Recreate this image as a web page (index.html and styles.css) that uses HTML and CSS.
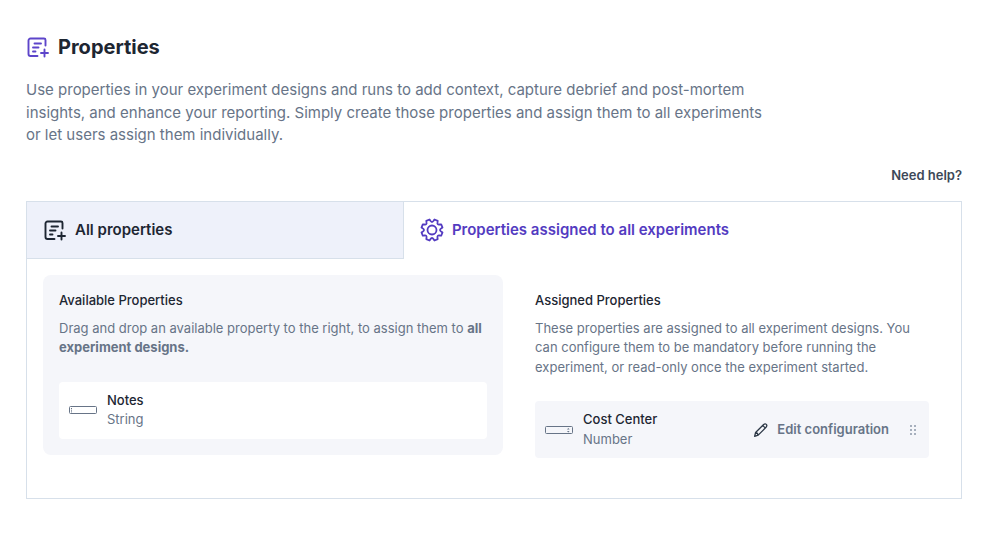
FILE: index.html
```html
<!DOCTYPE html>
<html lang="en">
<head>
<meta charset="utf-8">
<meta name="viewport" content="width=device-width, initial-scale=1">
<title>Properties</title>
<link rel="stylesheet" href="styles.css">
</head>
<body>
<svg class="sprite" aria-hidden="true">
  <symbol id="icon-properties" viewBox="0 0 24 24">
    <path d="M19.500 10.500V5a1.500 1.500 0 0 0-1.500-1.500H4.500a2 2 0 0 0-2 2v13.500a2 2 0 0 0 2 2h7M8.500 8.500H15M7 12.500h5.500M7 16.500H9.500M18.500 14.500v7M15 18h7" fill="none" stroke="currentColor" stroke-width="1.900" stroke-linecap="round"/>
  </symbol>
</svg>
<main class="page">
  <header class="intro">
    <h1 class="title"><svg class="icon title-icon" aria-hidden="true"><use href="#icon-properties"/></svg>Properties</h1>
    <p class="lead">Use properties in your experiment designs and runs to add context, capture debrief and post-mortem insights, and enhance your reporting. Simply create those properties and assign them to all experiments or let users assign them individually.</p>
  </header>
  <a class="help" href="#help">Need help?</a>
  <section class="box">
    <div class="tabs" role="tablist">
      <button class="tab tab-idle" type="button" role="tab" aria-selected="false"><svg class="icon" aria-hidden="true"><use href="#icon-properties"/></svg>All properties</button>
      <button class="tab tab-active" type="button" role="tab" aria-selected="true">
        <svg class="icon" viewBox="0 0 24 24" aria-hidden="true" fill="none" stroke="currentColor" stroke-width="1.800" stroke-linejoin="round"><circle cx="12" cy="12" r="4.500"/><path d="M10.300 2.600Q12 5.400 13.700 2.600L14.500 1.500L17.700 2.800L17.500 4.200Q16.900 7.100 19.800 6.500L21.200 6.300L22.500 9.500L21.400 10.300Q18.600 12 21.400 13.700L22.500 14.500L21.200 17.700L19.800 17.500Q16.900 16.900 17.500 19.800L17.700 21.200L14.500 22.500L13.700 21.400Q12 18.600 10.300 21.400L9.500 22.500L6.300 21.200L6.500 19.800Q7.100 16.900 4.200 17.500L2.800 17.700L1.500 14.500L2.600 13.700Q5.400 12 2.600 10.300L1.500 9.500L2.800 6.300L4.200 6.500Q7.100 7.100 6.500 4.200L6.300 2.800L9.500 1.500Z"/></svg>
        Properties assigned to all experiments</button>
    </div>
    <div class="columns">
      <section class="column available">
        <h2 class="heading">Available Properties</h2>
        <p class="text">Drag and drop an available property to the right, to assign them to <strong>all experiment designs.</strong></p>
        <div class="card">
          <svg class="field-icon" viewBox="0 0 30 10" aria-hidden="true" fill="none" stroke="currentColor"><rect x=".5" y="1.500" width="27" height="7" rx="1"/><path d="M2.500 3v4.500" stroke-dasharray="1 .7"/></svg>
          <div class="property"><h3 class="name">Notes</h3><p class="type">String</p></div>
        </div>
      </section>
      <section class="column">
        <h2 class="heading">Assigned Properties</h2>
        <p class="text">These properties are assigned to all experiment designs. You can configure them to be mandatory before running the experiment, or read-only once the experiment started.</p>
        <div class="card card-assigned">
          <svg class="field-icon" viewBox="0 0 30 10" aria-hidden="true" fill="none" stroke="currentColor"><rect x=".5" y="1.500" width="27" height="7" rx="1"/><path d="M22 4.500l1.300-1.500 1.300 1.500zM22 6l1.300 1.500L24.600 6z" fill="currentColor" stroke="none"/></svg>
          <div class="property"><h3 class="name">Cost Center</h3><p class="type">Number</p></div>
          <button class="edit" type="button"><svg class="pencil" viewBox="0 0 16 16" aria-hidden="true" fill="none" stroke="currentColor" stroke-width="1.300" stroke-linejoin="round"><path d="M1.600 14.400l1-3.900 7.800-7.800q1.700-1.500 2.900-.3t-.3 2.900L5.200 13.100zM9.700 3.400l2.700 2.700M2.600 10.500q2.200.4 2.600 2.600"/></svg>Edit configuration</button>
          <svg class="grip" viewBox="0 0 8 12" aria-hidden="true" fill="currentColor"><path d="M1 1h2v2H1zM5 1h2v2H5zM1 5h2v2H1zM5 5h2v2H5zM1 9h2v2H1zM5 9h2v2H5z"/></svg>
        </div>
      </section>
    </div>
  </section>
</main>
</body>
</html>
```
FILE: styles.css
```css
* { box-sizing: border-box; }
body {
  margin: 0;
  background: #fff;
  color: #1d2632;
  font: 400 13px/1.5 Inter, sans-serif;
}
h1, h2, h3, p { margin: 0; }
button { border: 0; background: none; font: inherit; cursor: pointer; }
.sprite { position: absolute; width: 0; height: 0; }
.page {
  display: flex;
  flex-direction: column;
  padding: 32px 42px 48px 26px;
}
.title {
  display: flex;
  align-items: center;
  gap: 8px;
  font-size: 20px;
  font-weight: 700;
  line-height: 30px;
}
.icon { width: 24px; height: 24px; flex: none; }
.title-icon { color: #5d45ca; }
.lead {
  max-width: 744px;
  margin-top: 17px;
  color: #677487;
  font-size: 15px;
}
.help {
  align-self: flex-end;
  margin: 19px 0 16px;
  color: #3d4858;
  font-weight: 600;
  text-decoration: none;
}
.box { border: 1px solid #d7e0ea; }
.tabs { display: grid; grid-template-columns: 23fr 34fr; }
.tab {
  display: flex;
  align-items: center;
  gap: 8px;
  padding: 16px;
  border-bottom: 1px solid transparent;
  font-size: 15px;
  font-weight: 600;
  line-height: 24px;
  text-align: left;
}
.tab-idle {
  border-right: 1px solid #d7e0ea;
  border-bottom-color: #d7e0ea;
  background: #eef1fa;
  color: #1d2632;
}
.tab-active { color: #533bc1; }
.columns {
  display: grid;
  grid-template-columns: 54fr 50fr;
  align-items: start;
  gap: 16px;
  padding: 16px 16px 24px;
}
.column { padding: 16px; border-radius: 8px; }
.available { background: #f5f6fa; }
.heading { font-size: 13px; font-weight: 500; }
.text { margin-top: 8px; color: #677487; }
.text strong { font-weight: 700; }
.card {
  display: flex;
  align-items: center;
  gap: 8px;
  margin-top: 24px;
  padding: 9px 8px 9px 10px;
  border-radius: 4px;
  background: #fff;
}
.card-assigned { background: #f5f6fa; }
.field-icon { width: 30px; height: 10px; flex: none; color: #677487; }
.property { flex: 1; }
.name { font-size: 13px; font-weight: 500; }
.type { color: #677487; }
.edit {
  display: flex;
  align-items: center;
  gap: 8px;
  padding: 0;
  color: #677487;
  font-weight: 600;
}
.pencil { width: 16px; height: 16px; color: #2d3846; }
.grip { width: 8px; height: 12px; margin: 0 4px 0 12px; color: #a6afbd; }
```
